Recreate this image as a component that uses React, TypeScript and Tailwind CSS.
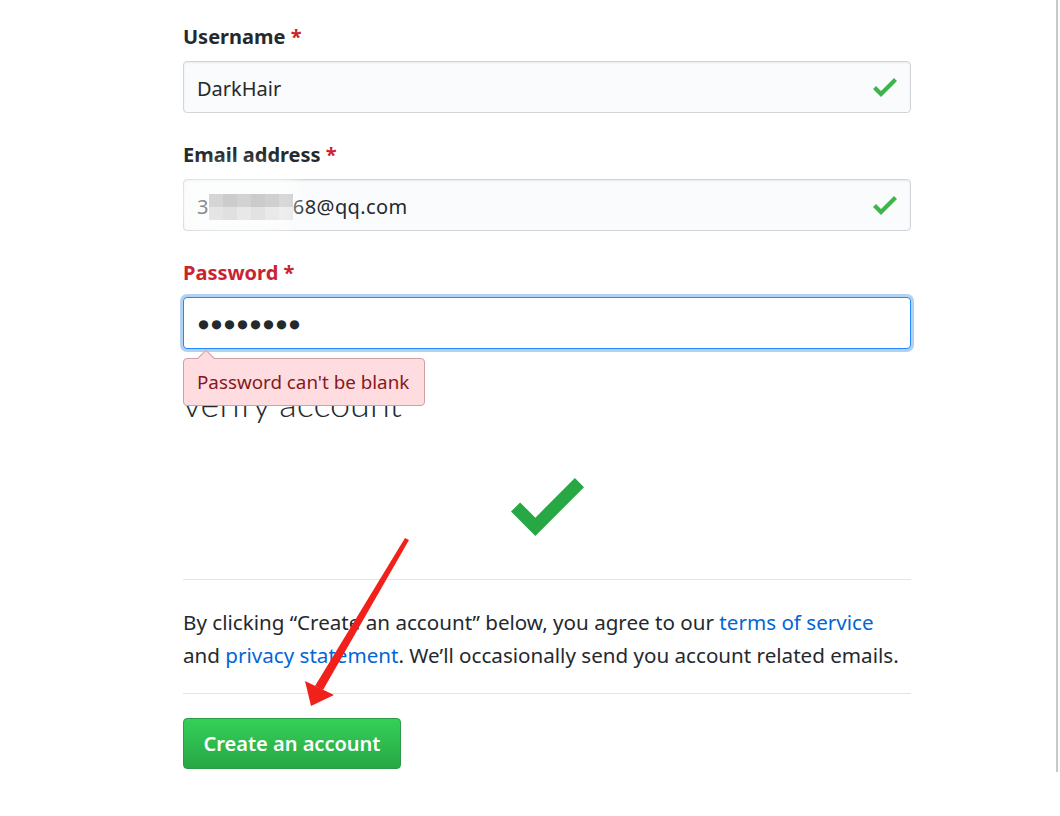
import React from "react";

function Check({ className }: { className?: string }) {
  return (
    <svg viewBox="0 3.5 12 9.5" className={className} fill="currentColor">
      <path d="M12 5l-8 8-4-4 1.5-1.5L4 10l6.5-6.5L12 5z" />
    </svg>
  );
}

const mosaic = [
  ["#b3b3b3", "#a3a3a3", "#aeaeae", "#a0a0a0", "#aaaaaa", "#b8b8b8"],
  ["#d0d0d0", "#c6c6c6", "#d5d5d5", "#cbcbcb", "#d8d8d8", "#e0e0e0"],
];

function Label({ children, error }: { children: React.ReactNode; error?: boolean }) {
  return (
    <div
      className={`h-[32px] leading-[32px] text-[20px] font-bold ${error ? "text-[#cb2431]" : "text-[#24292e]"}`}
    >
      {children} <span className="text-[#cb2431]">*</span>
    </div>
  );
}

export default function App() {
  return (
    <div
      className="flex w-[1060px] h-[816px] bg-white overflow-hidden"
      style={{ fontFamily: '"Noto Sans", "Open Sans", sans-serif' }}
    >
      <div className="relative w-[1056px] pl-[183px] pt-[21px]">
        <div className="w-[728px]">
          {/* username */}
          <Label>Username</Label>
          <div className="mt-[8px] flex h-[52px] items-center justify-between rounded-[4px] border border-[#d1d5da] bg-[#fafbfc] px-[13px] pt-[3px] shadow-[inset_0_1px_2px_rgba(27,31,35,0.075)]">
            <span className="text-[20px] text-[#24292e]">DarkHair</span>
            <Check className="-mt-[3px] h-[19px] w-[24px] text-[#3cb54a]" />
          </div>

          {/* email */}
          <div className="mt-[26px]">
            <Label>Email address</Label>
          </div>
          <div className="relative mt-[8px] flex h-[52px] items-center justify-between rounded-[4px] border border-[#d1d5da] bg-[#fafbfc] px-[13px] pt-[3px] shadow-[inset_0_1px_2px_rgba(27,31,35,0.075)]">
            <div className="flex items-center text-[20px] tracking-[0.4px] text-[#24292e]">
              <span>3</span>
              <div className="flex flex-col">
                {mosaic.map((row, i) => (
                  <div key={i} className="flex">
                    {row.map((c, j) => (
                      <div key={j} className="h-[13px] w-[14px]" style={{ background: c }} />
                    ))}
                  </div>
                ))}
              </div>
              <span>68@qq.com</span>
            </div>
            <Check className="-mt-[3px] h-[19px] w-[24px] text-[#3cb54a]" />
            <div className="absolute left-[-8px] top-[-16px] h-[74px] w-[125px] rounded-full bg-white/45 blur-[7px]" />
          </div>

          {/* password */}
          <div className="mt-[26px]">
            <Label error>Password</Label>
          </div>
          <div className="relative mt-[8px]">
            <div className="flex h-[52px] items-center rounded-[4px] border border-[#2188ff] bg-white px-[13px] shadow-[0_0_0_3px_rgba(3,102,214,0.3)]">
              <span className="text-[21.5px] text-[#24292e]">●●●●●●●●</span>
            </div>
            <div className="absolute left-0 top-[61px] z-10 flex h-[48px] w-[242px] items-center whitespace-nowrap rounded-[4px] border border-[#cea0a5] bg-[#ffdce0] px-[13px] text-[18.8px] text-[#86181d]">
              Password can't be blank
              <div className="absolute left-[16px] top-[-7px] h-[12px] w-[12px] rotate-45 border-l border-t border-[#cea0a5] bg-[#ffdce0]" />
            </div>
          </div>

          {/* verify account */}
          <div
            className="mt-[33px] h-[42px] text-[36px] font-light leading-[42px] text-[#24292e]"
            style={{ fontFamily: "Lato, 'Open Sans', sans-serif" }}
          >
            verify account
          </div>

          <div className="mt-[54px] flex justify-center">
            <Check className="h-[58px] w-[73px] text-[#28a745]" />
          </div>

          <div className="mt-[43px] h-px bg-[#e1e4e8]" />

          <p className="mt-[26px] text-[20.6px] leading-[33px] text-[#24292e]">
            By clicking “Create an account” below, you agree to our{" "}
            <a className="text-[#0366d6]">terms of service</a>
            <br />
            and <a className="text-[#0366d6]">privacy statement</a>. We’ll occasionally send you account related emails.
          </p>

          <div className="mt-[21px] h-px bg-[#e1e4e8]" />

          <button className="mt-[24px] flex h-[51px] w-[218px] items-center justify-center rounded-[4px] border border-[#2a9c47] bg-gradient-to-b from-[#34d058] to-[#28a745] text-[20px] font-semibold text-white">
            Create an account
          </button>
        </div>

        {/* annotation arrow */}
        <svg className="pointer-events-none absolute left-0 top-0" width="1056" height="816">
          <polygon points="405,538 409,540 323,690 315,686" fill="#f2201b" />
          <polygon points="311,706 305,681 334,695" fill="#f2201b" />
        </svg>
      </div>
      <div className="mt-0 h-[772px] w-[2px] bg-[#c8c8c8]" />
    </div>
  );
}
